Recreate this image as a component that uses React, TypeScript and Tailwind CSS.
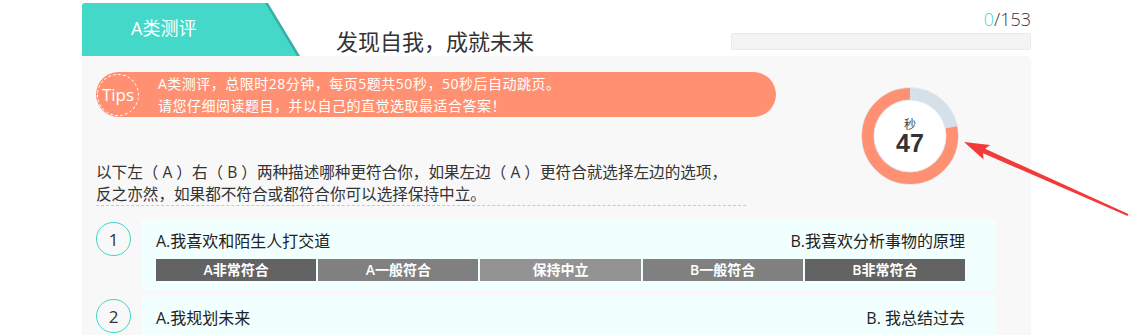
const options = [
  { label: 'A非常符合', cls: 'bg-[#636363]' },
  { label: 'A一般符合', cls: 'bg-[#808080]' },
  { label: '保持中立', cls: 'bg-[#939393]' },
  { label: 'B一般符合', cls: 'bg-[#808080]' },
  { label: 'B非常符合', cls: 'bg-[#636363]' },
];

const questions = [
  { no: 1, a: 'A.我喜欢和陌生人打交道', b: 'B.我喜欢分析事物的原理' },
  { no: 2, a: 'A.我规划未来', b: 'B. 我总结过去' },
];

function Timer({ seconds, total }: { seconds: number; total: number }) {
  const c = 2 * Math.PI * 42;
  const done = (seconds / total) * c;
  return (
    <div className="relative w-[98px] h-[98px]">
      <svg width="98" height="98" viewBox="0 0 98 98">
        <circle cx="49" cy="49" r="48.5" fill="none" stroke="#e2e8ee" strokeWidth="1" />
        <circle cx="49" cy="49" r="42" fill="none" stroke="#d6e0e9" strokeWidth="12" />
        <circle
          cx="49"
          cy="49"
          r="42"
          fill="none"
          stroke="#ff9172"
          strokeWidth="12"
          strokeDasharray={`${done} ${c}`}
          strokeDashoffset={-(c - done)}
          transform="rotate(-90 49 49)"
        />
        <circle cx="49" cy="49" r="36" fill="#fff" stroke="#e2e8ee" strokeWidth="1" />
      </svg>
      <div className="absolute inset-0 flex flex-col items-center justify-center">
        <span className="text-[12px] leading-[13px] text-[#444]">秒</span>
        <span className="text-[25px] leading-[24px] font-bold text-[#333] font-['Liberation_Sans',sans-serif]">
          {seconds}
        </span>
      </div>
    </div>
  );
}

export default function App() {
  return (
    <div className="relative w-[1143px] h-[335px] overflow-hidden bg-white font-['Open_Sans','Noto_Sans_CJK_SC',sans-serif] text-[#333]">
      <div className="ml-[82px] w-[949px]">
        {/* Header */}
        <div className="flex items-end h-[56px]">
          <div className="relative w-[218px] h-[53px] shrink-0">
            <div className="absolute inset-0 bg-[#38aea4] [clip-path:polygon(0_0,186px_0,218px_100%,0_100%)] rounded-tl-[4px]" />
            <div className="absolute inset-0 bg-[#44d8c9] [clip-path:polygon(0_0,183px_0,215px_100%,0_100%)] rounded-tl-[4px] flex items-center pl-[49px] pb-[4px]">
              <span className="text-white text-[18px] leading-none">A类测评</span>
            </div>
          </div>
          <div className="ml-[36px] text-[22px] leading-[26px] pb-[2px] text-[#333]">发现自我，成就未来</div>
          <div className="ml-auto w-[300px] self-start pt-[7px]">
            <div className="text-right text-[18px] leading-[24px] font-light text-[#333]">
              <span className="text-[#44d8c9]">0</span>/153
            </div>
            <div className="mt-[2px] h-[17px] bg-[#f4f4f4] border border-[#eaeaea] rounded-[2px]" />
          </div>
        </div>

        {/* Panel */}
        <div className="bg-[#f8f8f8] rounded-tr-[6px] h-[279px] pl-[14px] pt-[16px]">
          <div className="flex">
            <div>
              <div className="flex items-center w-[680px] h-[45px] rounded-full bg-[#ff9172] text-white">
                <div className="w-[42px] h-[42px] ml-[1px] rounded-full border border-dashed border-white flex items-center justify-center shrink-0">
                  <span className="text-[17px] leading-none">Tips</span>
                </div>
                <div className="ml-[19px] text-[14px] tracking-[0.5px] leading-[22px]">
                  <div>A类测评，总限时28分钟，每页5题共50秒，50秒后自动跳页。</div>
                  <div>请您仔细阅读题目，并以自己的直觉选取最适合答案！</div>
                </div>
              </div>
              <div className="mt-[44px] w-[650px] border-b border-dashed border-[#c8c8c8] text-[15.6px] leading-[22px] text-[#333]">
                <div>以下左（ A ）右（ B ）两种描述哪种更符合你，如果左边（ A ）更符合就选择左边的选项，</div>
                <div>反之亦然，如果都不符合或都符合你可以选择保持中立。</div>
              </div>
            </div>
            <div className="ml-auto mr-[72px] mt-[15px]">
              <Timer seconds={47} total={60} />
            </div>
          </div>

          <div className="mt-[13px] flex flex-col gap-[6px]">
            {questions.map((q) => (
              <div key={q.no} className="flex items-start">
                <div className="mt-[3px] w-[35px] h-[34px] rounded-full border-[1.5px] border-[#3fd6c6] flex items-center justify-center text-[17px] leading-none text-[#333] shrink-0">
                  {q.no}
                </div>
                <div className="relative ml-[10px] w-[855px] bg-[#f2ffff] pl-[15px] pr-[31px] pt-[11px] pb-[9px]">
                  <div className="absolute left-0 top-0 w-[6px] h-[6px] bg-[#fbfbfb] [clip-path:polygon(0_0,100%_0,100%_100%)]" />
                  <div className="flex justify-between text-[16px] leading-[22px] text-[#222]">
                    <span>{q.a}</span>
                    <span>{q.b}</span>
                  </div>
                  <div className="mt-[7px] flex gap-[2px]">
                    {options.map((o) => (
                      <div
                        key={o.label}
                        className={`${o.cls} flex-1 h-[22px] flex items-center justify-center text-white text-[14px] font-semibold leading-none`}
                      >
                        {o.label}
                      </div>
                    ))}
                  </div>
                </div>
              </div>
            ))}
          </div>
        </div>
      </div>

      {/* annotation arrow */}
      <svg className="absolute left-0 top-0 pointer-events-none" width="1143" height="335" viewBox="0 0 1143 335">
        <polygon
          points="964,142 990.2,144.9 985.1,148.7 1128.4,214.1 1127.6,215.9 983.1,153.3 983.6,159.5"
          fill="#f33a3a"
        />
      </svg>
    </div>
  );
}
